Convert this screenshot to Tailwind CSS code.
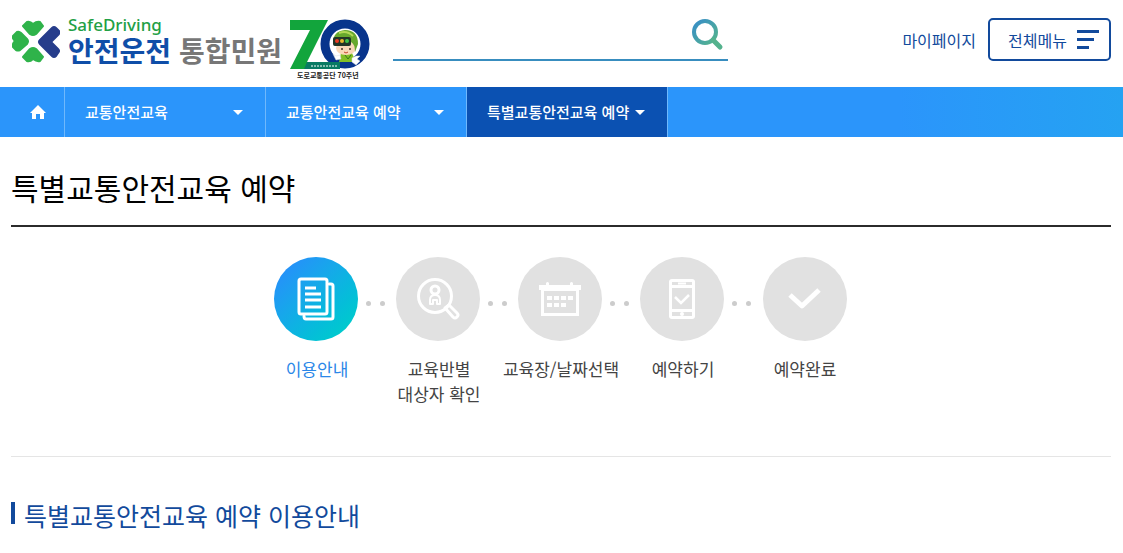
<!DOCTYPE html>
<html lang="ko">
<head>
  <meta charset="UTF-8" />
  <meta name="viewport" content="width=device-width, initial-scale=1.0" />
  <title>특별교통안전교육 예약 | 안전운전 통합민원</title>
  <script src="https://cdn.jsdelivr.net/npm/@tailwindcss/browser@4"></script>
</head>
<body class="bg-white text-black font-['Noto_Sans_CJK_KR',sans-serif] overflow-x-hidden">

  <!-- Header -->
  <header class="flex items-center h-[87px] px-3 pb-2">
    <a href="#" class="flex items-center shrink-0" aria-label="안전운전 통합민원">
      <svg class="w-12 h-11 mt-1" viewBox="0 0 48 44" stroke-width="2" stroke-linejoin="round">
        <g fill="#2fb34a" stroke="#2fb34a">
          <path d="M11 6 15 2Q18 1 21 4Q25 1 28 2L31 6 24 14Q21 16 18 14Z" />
          <path d="M1 16 5 12Q7 11 9 13L15 19Q17 21 15 24L8 30Q6 31 4 30L1 27Q0 24 3 21Q0 18 1 16Z" />
          <path d="M11 37 15 41Q18 42 21 39Q25 42 28 41L31 37 24 29Q21 27 18 29Z" />
        </g>
        <path fill="#263d8b" stroke="#263d8b" d="M28 20 40 8Q42 6 44 8L47 11Q48 13 46 15L40 21Q39 22 40 23L46 29Q48 31 46 33L44 36Q42 38 40 36L28 24Q26 22 28 20Z" />
      </svg>
      <span class="flex flex-col ml-2 mt-[3px]">
        <span class="text-[17px] leading-[18px] text-[#22a045] font-medium font-['Noto_Sans',sans-serif]">SafeDriving</span>
        <span class="flex gap-2 text-[28px] leading-8 font-bold">
          <span class="text-[#0f4ea8]">안전운전</span>
          <span class="text-[#777777]">통합민원</span>
        </span>
      </span>
    </a>

    <!-- 70th anniversary emblem -->
    <svg class="w-20 h-[61px] ml-2 mt-5 shrink-0" viewBox="0 0 80 61" role="img" aria-label="도로교통공단 70주년">
      <circle cx="55" cy="25" r="20" fill="#fff" stroke="#08348c" stroke-width="9" />
      <path d="M0 1H38L17 43H50V50H0L20 11H0Z" fill="#12a53c" />
      <path d="M17 43H50V50H14Z" fill="#087a63" />
      <path d="M21 47H47" stroke="#fff" stroke-width="1" stroke-dasharray="2 1" />
      <path d="M51 34H62L66 43H49Z" fill="#82bf27" />
      <path d="M55 36 58 40 61 36" fill="none" stroke="#37791b" />
      <ellipse cx="56" cy="29" rx="10" ry="7" fill="#f9d8b8" />
      <path d="M43 24Q43 12 55 11Q68 11 68 25L65 33Q65 25 61 23L45 27Z" fill="#67a82d" />
      <path d="M49 14Q57 11 63 17" fill="none" stroke="#b2d956" stroke-width="2" />
      <rect x="43" y="18" width="18" height="9" rx="2" fill="#223626" />
      <circle cx="47" cy="22" r="2" fill="#ed3b23" />
      <circle cx="52" cy="22" r="2" fill="#e9b72c" />
      <circle cx="57" cy="22" r="2" fill="#3ec449" />
      <circle cx="52" cy="30" r="1" fill="#433229" />
      <circle cx="60" cy="30" r="1" fill="#433229" />
      <path d="M54 33Q56 35 58 33" fill="none" stroke="#c4452c" />
      <path d="M43 35 46 37 50 36 51 40 46 41ZM62 39 66 37 70 37 67 40 70 42 66 46 62 43Z" fill="#fff" stroke="#d7dde0" stroke-width=".5" />
      <text x="7" y="59" font-size="7" font-weight="700" fill="#222">도로교통공단 70주년</text>
    </svg>

    <form class="flex w-[335px] h-[45px] mb-[3px] ml-[23px] border-b-2 border-[#388dbf]" role="search">
      <input type="search" aria-label="검색어" class="flex-1 min-w-0 bg-transparent outline-none" />
      <button type="submit" aria-label="검색" class="w-9 pb-1">
        <svg class="w-8 h-8" viewBox="0 0 32 32" fill="none" stroke-width="4">
          <defs>
            <linearGradient id="lens" x1="0" y1="0" x2="1" y2="1">
              <stop offset="0" stop-color="#378dc8" />
              <stop offset="1" stop-color="#55b58c" />
            </linearGradient>
          </defs>
          <circle cx="13" cy="13" r="11" stroke="url(#lens)" />
          <path d="M21 21 28 28" stroke="#54b28d" stroke-width="5" stroke-linecap="round" />
        </svg>
      </button>
    </form>

    <div class="flex items-center ml-auto gap-3 text-[#124a9c]">
      <a href="#">마이페이지</a>
      <button type="button" class="flex items-center gap-[10px] w-[123px] h-[43px] pl-[18px] border-2 border-[#124a9c] rounded-[5px]">
        전체메뉴
        <svg class="w-[22px] h-5" viewBox="0 0 22 20" fill="currentColor">
          <path d="M0 0h22v3H0zM0 8h17v3H0zM0 16h12v3H0z" />
        </svg>
      </button>
    </div>
  </header>

  <!-- Breadcrumb bar -->
  <nav class="flex h-[50px] px-[11px] bg-linear-to-r from-[#2b95fb] from-80% to-[#25a2f2] text-white text-[15px] font-medium" aria-label="현재 위치">
    <a href="#" aria-label="홈" class="flex items-center w-[54px] pl-[19px] border-r border-[#6fb8fc]">
      <svg class="w-4 h-[14px]" viewBox="0 0 16 14" fill="currentColor"><path d="M8 0 0 8H2V14H6V9H10V14H14V8H16Z" /></svg>
    </a>
    <button type="button" aria-haspopup="true" class="flex items-center justify-between w-[201px] pl-5 pr-[22px] border-r border-[#6fb8fc]">
      교통안전교육
      <svg class="w-[10px] h-[5px]" viewBox="0 0 10 5" fill="currentColor"><path d="M0 0h10L5 5z" /></svg>
    </button>
    <button type="button" aria-haspopup="true" class="flex items-center justify-between w-[201px] pl-5 pr-[22px] border-r border-[#6fb8fc]">
      교통안전교육 예약
      <svg class="w-[10px] h-[5px]" viewBox="0 0 10 5" fill="currentColor"><path d="M0 0h10L5 5z" /></svg>
    </button>
    <button type="button" aria-haspopup="true" class="flex items-center justify-between w-[201px] pl-5 pr-[22px] border-r border-[#6fb8fc] bg-[#0b51b2]">
      특별교통안전교육 예약
      <svg class="w-[10px] h-[5px]" viewBox="0 0 10 5" fill="currentColor"><path d="M0 0h10L5 5z" /></svg>
    </button>
  </nav>

  <main class="px-[11px] mr-px">
    <h1 class="pt-7 pb-4 text-[30px] leading-[44px] border-b-2 border-[#2b2b2b]">특별교통안전교육 예약</h1>

    <!-- Reservation steps -->
    <ol class="grid grid-cols-5 w-[610px] mx-auto pt-[30px] pb-[50px] text-[17px] leading-[25px] text-center text-[#444444]">
      <li class="grid grid-cols-[1fr_84px_1fr] items-center content-start gap-y-[15px]" aria-current="step">
        <span class="col-start-2 flex items-center justify-center w-[84px] h-[84px] rounded-full bg-linear-to-br from-[#2493f8] from-15% to-[#00c9ce] to-85%">
          <svg class="w-10 h-11" viewBox="0 0 40 44" fill="none" stroke="#fff" stroke-width="3" stroke-linejoin="round" stroke-linecap="round">
            <rect x="3" y="2" width="28" height="35" rx="2" />
            <path d="M33 7H35Q37 7 37 9V40Q37 42 35 42H10Q8 42 8 39" />
            <path d="M9 11H20M9 17H25M9 23H25M9 30H25" stroke-linecap="butt" />
          </svg>
        </span>
        <span class="flex gap-[9px] w-5 pl-2 pt-2"><i class="size-[5px] shrink-0 rounded-full bg-[#cccccc]"></i><i class="size-[5px] shrink-0 rounded-full bg-[#cccccc]"></i></span>
        <span class="col-span-3 text-[#2b87e8]">이용안내</span>
      </li>
      <li class="grid grid-cols-[1fr_84px_1fr] items-center content-start gap-y-[15px]">
        <span class="col-start-2 flex items-center justify-center w-[84px] h-[84px] rounded-full bg-[#e1e1e1]">
          <svg class="w-11 h-11" viewBox="0 0 44 44" fill="none" stroke="#fff" stroke-width="3" stroke-linejoin="round">
            <circle cx="19" cy="19" r="16.5" />
            <circle cx="19" cy="13" r="4" />
            <path d="M14 27V23Q14 18 19 18T24 23V27H21V23H17V27Z" stroke-width="2" />
            <path d="M29 31 33 28 41 36Q43 38 41 40T37 40Z" />
          </svg>
        </span>
        <span class="flex gap-[9px] w-5 pl-2 pt-2"><i class="size-[5px] shrink-0 rounded-full bg-[#cccccc]"></i><i class="size-[5px] shrink-0 rounded-full bg-[#cccccc]"></i></span>
        <span class="col-span-3">교육반별<br />대상자 확인</span>
      </li>
      <li class="grid grid-cols-[1fr_84px_1fr] items-center content-start gap-y-[15px]">
        <span class="col-start-2 flex items-center justify-center w-[84px] h-[84px] rounded-full bg-[#e1e1e1]">
          <svg class="w-11 h-9" viewBox="0 0 44 36" fill="#fff">
            <path d="M1 4H8V2Q9.500 0 11 2V4H32V2Q33.500 0 35 2V4H43V9H41V35H3V9H1ZM6 10V32H38V10Z" fill-rule="evenodd" />
            <path d="M9 15h5v4H9zM16 15h5v4h-5zM23 15h5v4h-5zM30 15h5v4h-5zM9 22h5v4H9zM16 22h5v4h-5zM23 22h5v4h-5z" />
          </svg>
        </span>
        <span class="flex gap-[9px] w-5 pl-2 pt-2"><i class="size-[5px] shrink-0 rounded-full bg-[#cccccc]"></i><i class="size-[5px] shrink-0 rounded-full bg-[#cccccc]"></i></span>
        <span class="col-span-3">교육장/날짜선택</span>
      </li>
      <li class="grid grid-cols-[1fr_84px_1fr] items-center content-start gap-y-[15px]">
        <span class="col-start-2 flex items-center justify-center w-[84px] h-[84px] rounded-full bg-[#e1e1e1]">
          <svg class="w-[26px] h-10" viewBox="0 0 26 40">
            <rect width="26" height="40" rx="3" fill="#fff" />
            <path d="M3 3H23V6H3ZM3 9H23V30H3ZM3 33H23V37H3Z" fill="#e1e1e1" />
            <path d="M9 4.500H17" stroke="#fff" stroke-width="2" />
            <circle cx="13" cy="35" r="2" fill="#fff" />
            <path d="M6 18 12 24 20 16" fill="none" stroke="#fff" stroke-width="2.500" />
          </svg>
        </span>
        <span class="flex gap-[9px] w-5 pl-2 pt-2"><i class="size-[5px] shrink-0 rounded-full bg-[#cccccc]"></i><i class="size-[5px] shrink-0 rounded-full bg-[#cccccc]"></i></span>
        <span class="col-span-3">예약하기</span>
      </li>
      <li class="grid grid-cols-[1fr_84px_1fr] items-center content-start gap-y-[15px]">
        <span class="col-start-2 flex items-center justify-center w-[84px] h-[84px] rounded-full bg-[#e1e1e1]">
          <svg class="w-9 h-6" viewBox="0 0 36 24" fill="none" stroke="#fff" stroke-width="5" stroke-linejoin="round"><path d="M3 8 15 19 32 3" /></svg>
        </span>
        <span class="col-span-3">예약완료</span>
      </li>
    </ol>

    <section class="pt-10 border-t border-[#e5e5e5]">
      <h2 class="flex items-center gap-[9px] text-[25px] leading-9 text-[#124a9c]">
        <span class="w-1 h-[22px] mb-1 bg-[#124a9c]"></span>
        특별교통안전교육 예약 이용안내
      </h2>
    </section>
  </main>

</body>
</html>
